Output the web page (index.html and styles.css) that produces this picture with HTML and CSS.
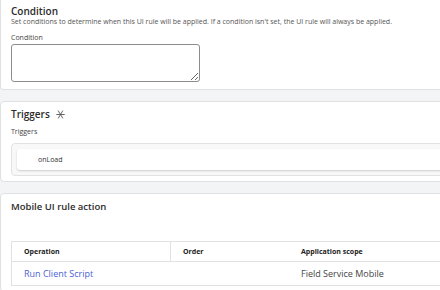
FILE: index.html
```html
<!DOCTYPE html>
<html lang="en">
<head>
    <meta charset="UTF-8">
    <meta name="viewport" content="width=device-width, initial-scale=1.0">
    <title>Mobile UI rule</title>
    <link rel="stylesheet" href="styles.css">
</head>
<body>
    <div class="page">
        <div class="card card-first">
            <h2 class="card-title">Condition</h2>
            <p class="card-desc">Set conditions to determine when this UI rule will be applied. If a condition isn't set, the UI rule will always be applied.</p>
            <label class="field-label" for="condition">Condition</label>
            <textarea id="condition" class="condition-input"></textarea>
        </div>

        <div class="card">
            <h2 class="card-title">Triggers
                <svg class="required" width="9" height="9" viewBox="0 0 10 10">
                    <g stroke="#555" stroke-width="1" stroke-linecap="round">
                        <line x1="0.8" y1="5" x2="9.2" y2="5"/>
                        <line x1="2.6" y1="1" x2="7.4" y2="9"/>
                        <line x1="7.4" y1="1" x2="2.6" y2="9"/>
                    </g>
                </svg>
            </h2>
            <div class="field-label">Triggers</div>
            <div class="trigger-box">
                <div class="trigger-item">onLoad</div>
            </div>
        </div>

        <div class="card">
            <h2 class="card-title small-title">Mobile UI rule action</h2>
            <table class="action-table">
                <thead>
                    <tr>
                        <th class="col-op">Operation</th>
                        <th class="col-order">Order</th>
                        <th>Application scope</th>
                    </tr>
                </thead>
                <tbody>
                    <tr>
                        <td><a href="#">Run Client Script</a></td>
                        <td></td>
                        <td class="scope">Field Service Mobile</td>
                    </tr>
                </tbody>
            </table>
        </div>
    </div>
</body>
</html>
```

FILE: styles.css
```css
body {
    margin: 0;
    padding: 0;
    font-family: "Open Sans", Arial, sans-serif;
    background-color: #f3f4f5;
    overflow: hidden;
}

.page {
    width: 480px;
}

.card {
    background-color: white;
    border: 1px solid #dfe0e2;
    border-radius: 4px;
    padding: 7px 10px 5px 10px;
    margin-top: 11px;
}

.card-first {
    border-top: none;
    border-radius: 0 0 4px 4px;
    margin-top: 0;
    padding-top: 6px;
    padding-bottom: 7px;
}

.card-title {
    margin: 0;
    font-size: 10px;
    line-height: 11px;
    font-weight: 600;
    color: #2b2b2b;
    display: flex;
    align-items: center;
}

.small-title {
    font-size: 9.5px;
}

.required {
    margin-left: 6px;
}

.card-desc {
    margin: 0;
    font-size: 7px;
    line-height: 9px;
    color: #555;
}

.field-label {
    display: block;
    margin-top: 7px;
    font-size: 7px;
    line-height: 9px;
    color: #444;
}

.condition-input {
    display: block;
    box-sizing: border-box;
    width: 189px;
    height: 38px;
    margin-top: 2px;
    border: 1px solid #8c8c8c;
    border-radius: 3px;
    background: white;
}

.trigger-box {
    margin-top: 7px;
    border: 1px solid #e1e2e4;
    border-radius: 4px;
    background-color: #f8f8f9;
    padding: 5px;
}

.trigger-item {
    background: white;
    border-radius: 3px;
    box-shadow: 0 1px 2px rgba(0,0,0,0.18);
    height: 21px;
    line-height: 21px;
    padding-left: 21px;
    font-size: 7px;
    color: #333;
}

.action-table {
    margin-top: 29px;
    width: 100%;
    border-collapse: collapse;
    border: 1px solid #e1e2e4;
    font-size: 9px;
}

.action-table th {
    text-align: left;
    font-size: 7px;
    font-weight: 700;
    color: #222;
    height: 19px;
    padding: 0 12px;
    border-bottom: 1px solid #e1e2e4;
}

.action-table th.col-op {
    width: 134px;
    border-right: 1px solid #e1e2e4;
}

.action-table th.col-order {
    width: 94px;
}

.action-table td {
    height: 23px;
    padding: 0 12px;
}

.action-table a {
    color: #4c5fd5;
    text-decoration: none;
}

.scope {
    color: #444;
}
```
